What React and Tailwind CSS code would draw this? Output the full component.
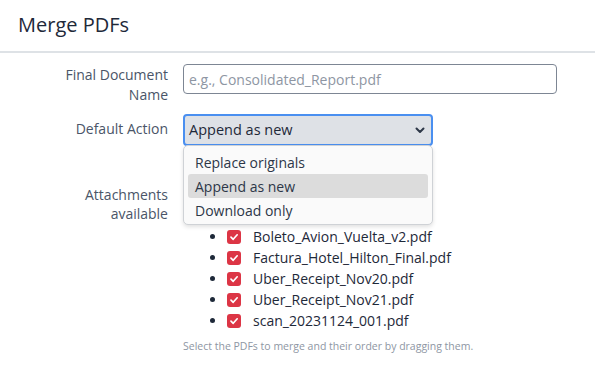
import React from "react";

const files = [
  "Boleto_Avion_Vuelta_v2.pdf",
  "Factura_Hotel_Hilton_Final.pdf",
  "Uber_Receipt_Nov20.pdf",
  "Uber_Receipt_Nov21.pdf",
  "scan_20231124_001.pdf",
];

function Check() {
  return (
    <span className="w-[14px] h-[14px] rounded-[3px] bg-[#dc3545] flex items-center justify-center shrink-0">
      <svg width="10" height="10" viewBox="0 0 10 10" fill="none">
        <path d="M2 5.2 L4.2 7.3 L8.2 2.8" stroke="white" strokeWidth="1.7" strokeLinecap="round" strokeLinejoin="round" />
      </svg>
    </span>
  );
}

export default function App() {
  return (
    <div className="w-[595px] h-[389px] bg-white overflow-hidden text-[#212529]" style={{ fontFamily: '"Open Sans", sans-serif' }}>
      <div className="h-[53px] flex items-center pl-[18px] border-b-2 border-[#dee2e6]">
        <h1 className="text-[20px] text-[#1e2939] leading-none -mt-[1px]">Merge PDFs</h1>
      </div>
      <div className="pt-[11px] flex flex-col">
        <div className="flex gap-[15px]">
          <label className="w-[168px] text-right text-[14px] leading-[20px] text-[#4a5568] pt-[1px]">
            Final Document
            <br />
            Name
          </label>
          <input
            className="w-[374px] h-[30px] border border-[#7d8694] rounded-[4px] px-[5px] text-[14px] placeholder:text-[#8e96a3] outline-none"
            placeholder="e.g., Consolidated_Report.pdf"
          />
        </div>
        <div className="flex gap-[15px] mt-[9px]">
          <label className="w-[168px] text-right text-[14px] leading-[20px] text-[#4a5568] pt-[5px]">Default Action</label>
          <div className="relative w-[250px]">
            <div className="h-[32px] border-2 border-[#4a8ff0] rounded-[4px] bg-[#dee1e6] flex items-center justify-between pl-[4px] pr-[6px] text-[14.5px] text-[#1e2939]">
              <span>Append as new</span>
              <svg width="10" height="7" viewBox="0 0 10 7" fill="none">
                <path d="M1.5 1.5 L5 5 L8.5 1.5" stroke="#2d3748" strokeWidth="2" strokeLinecap="round" strokeLinejoin="round" />
              </svg>
            </div>
            <div className="absolute left-0 top-[31px] w-[250px] h-[80px] bg-[#fafafa] border border-[#cfd2d6] rounded-[5px] shadow-[0_2px_4px_rgba(0,0,0,0.12)] px-[4px] pt-[4px] text-[14px] text-[#2d3748] z-10">
              <div className="h-[24px] flex items-center px-[7px]">Replace originals</div>
              <div className="h-[24px] flex items-center px-[7px] bg-[#dcdcdc] rounded-[3px]">Append as new</div>
              <div className="h-[24px] flex items-center px-[7px]">Download only</div>
            </div>
          </div>
        </div>
        <div className="flex gap-[15px] mt-[38px]">
          <label className="w-[168px] text-right text-[14px] leading-[19px] text-[#4a5568] pt-[1px]">
            Attachments
            <br />
            available
          </label>
          <div className="flex flex-col">
            <ul className="pt-[42px] pl-[27px] flex flex-col">
              {files.map((f) => (
                <li key={f} className="h-[21px] flex items-center text-[14px] text-[#1e2939]">
                  <span className="w-[5px] h-[5px] rounded-full bg-[#1e2939] mr-[12px]" />
                  <Check />
                  <span className="ml-[12px]">{f}</span>
                </li>
              ))}
            </ul>
            <p className="mt-[8px] text-[10.5px] text-[#8e96a3]">Select the PDFs to merge and their order by dragging them.</p>
          </div>
        </div>
      </div>
    </div>
  );
}
